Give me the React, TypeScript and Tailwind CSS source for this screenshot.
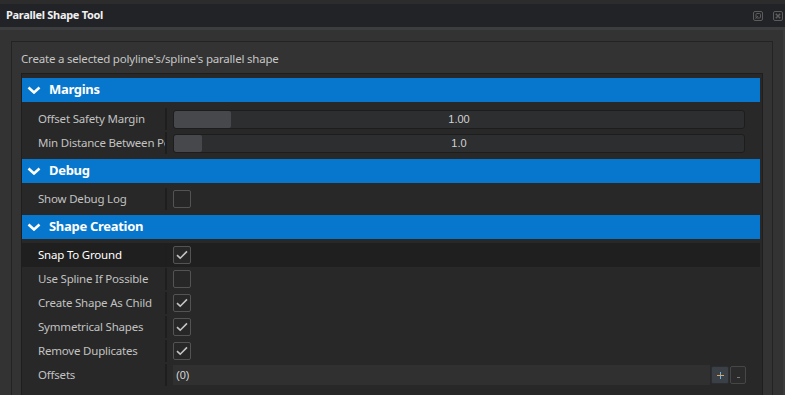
type Row =
  | { kind: "slider"; label: string; value: string; fill: number }
  | { kind: "check"; label: string; checked: boolean; active?: boolean }
  | { kind: "list"; label: string; value: string };

const sections: { title: string; rowsTop: string; rows: Row[] }[] = [
  {
    title: "Margins",
    rowsTop: "pt-[5px]",
    rows: [
      { kind: "slider", label: "Offset Safety Margin", value: "1.00", fill: 57 },
      { kind: "slider", label: "Min Distance Between Points", value: "1.0", fill: 28 },
    ],
  },
  {
    title: "Debug",
    rowsTop: "pt-[4px]",
    rows: [{ kind: "check", label: "Show Debug Log", checked: false }],
  },
  {
    title: "Shape Creation",
    rowsTop: "pt-[4px]",
    rows: [
      { kind: "check", label: "Snap To Ground", checked: true, active: true },
      { kind: "check", label: "Use Spline If Possible", checked: false },
      { kind: "check", label: "Create Shape As Child", checked: true },
      { kind: "check", label: "Symmetrical Shapes", checked: true },
      { kind: "check", label: "Remove Duplicates", checked: true },
      { kind: "list", label: "Offsets", value: "(0)" },
    ],
  },
];

function Checkbox({ checked }: { checked: boolean }) {
  return (
    <div className="w-[18px] h-[18px] rounded-[2px] border border-[#535353] bg-[#272727] flex items-center justify-center">
      {checked && (
        <svg width="12" height="10" viewBox="0 0 12 10" fill="none">
          <path d="M1 5.2 L4.2 8.2 L11 1.4" stroke="#c4c4c4" strokeWidth="1.6" />
        </svg>
      )}
    </div>
  );
}

function Slider({ value, fill }: { value: string; fill: number }) {
  return (
    <div className="relative w-[572px] h-[19px] rounded-[3px] border border-[#1d1d1d] bg-[#2d2e30] overflow-hidden flex items-center justify-center">
      <div
        className="absolute left-0 top-0 bottom-0 bg-[#46484b] rounded-[2px]"
        style={{ width: fill }}
      />
      <span className="relative text-[11px] text-[#d2d2d2] font-['Liberation_Sans',sans-serif]">
        {value}
      </span>
    </div>
  );
}

function ListField({ value }: { value: string }) {
  return (
    <div className="flex items-center h-[20px] gap-[1px]">
      <div className="w-[537px] h-[20px] bg-[#303030] flex items-center px-[3px] text-[11px] text-[#d8d8d8] font-['Liberation_Sans',sans-serif]">
        {value}
      </div>
      <div className="w-[18px] h-[18px] rounded-[2px] bg-[#3b4047] border border-[#2a2d31] flex items-center justify-center">
        <svg width="7" height="7" viewBox="0 0 7 7">
          <rect x="3" y="0" width="1" height="7" fill="#6fb0e8" />
          <rect x="0" y="3" width="7" height="1" fill="#d8a85a" />
        </svg>
      </div>
      <div className="w-[16px] h-[18px] rounded-[2px] border border-[#464646] bg-[#2b2b2b] flex items-center justify-center">
        <div className="w-[3px] h-[1px] bg-[#7a7a7a] mt-[4px]" />
      </div>
    </div>
  );
}

function PropertyRow({ row }: { row: Row }) {
  const active = row.kind === "check" && row.active;
  return (
    <div className={`h-[24px] flex items-stretch ${active ? "bg-[#1f1f20]" : ""}`}>
      <div
        className={`w-[143px] pl-[16px] flex items-center overflow-hidden whitespace-nowrap text-[11.5px] tracking-[-0.2px] ${
          active ? "text-white" : "text-[#c2c2c2]"
        }`}
      >
        {row.label}
      </div>
      <div className="w-[2px] my-[1px] bg-[#1e1e1e]" />
      <div className="flex-1 pl-[6px] flex items-center">
        {row.kind === "slider" && <Slider value={row.value} fill={row.fill} />}
        {row.kind === "check" && <Checkbox checked={row.checked} />}
        {row.kind === "list" && <ListField value={row.value} />}
      </div>
    </div>
  );
}

export default function App() {
  return (
    <div className="w-[785px] h-[395px] overflow-hidden bg-[#333333] flex flex-col font-['Noto_Sans',sans-serif]">
      <div className="h-[4px] bg-[#2c2c2c]" />
      <div className="h-[23px] bg-[#222326] flex items-center justify-between pl-[6px] pr-[2px]">
        <span className="text-[11px] font-bold text-[#f0f0f0] tracking-[-0.3px]">
          Parallel Shape Tool
        </span>
        <div className="flex items-center gap-[10px]">
          <svg width="10" height="10" viewBox="0 0 10 10" fill="none">
            <rect x="0.5" y="0.5" width="9" height="9" rx="1.5" stroke="#5c5c5c" />
            <rect x="3" y="2.5" width="4.5" height="4.5" rx="1" stroke="#5c5c5c" />
            <path d="M2.5 7.5 L5 5" stroke="#5c5c5c" />
          </svg>
          <svg width="10" height="10" viewBox="0 0 10 10" fill="none">
            <rect x="0.5" y="0.5" width="9" height="9" rx="1.5" stroke="#5c5c5c" />
            <path d="M2.8 2.8 L7.2 7.2 M7.2 2.8 L2.8 7.2" stroke="#5c5c5c" strokeWidth="1.6" />
          </svg>
        </div>
      </div>
      <div className="h-[3px] bg-[#3c3d3f]" />
      <div className="flex-1 min-h-0 flex">
        <div className="flex-1 min-h-0 flex pl-[11px] pr-[10px] pt-[11px]">
          <div className="flex-1 min-h-0 flex flex-col border border-b-0 border-[#232323] px-[9px]">
            <p className="h-[31px] pt-[10px] leading-[14px] text-[11.5px] tracking-[-0.2px] text-[#c6c6c6]">
              Create a selected polyline's/spline's parallel shape
            </p>
            <div className="flex-1 min-h-0 border border-b-0 border-[#1e1e1e] bg-[#282828] pt-[4px] pr-[2px] flex flex-col">
              {sections.map((section) => (
                <div key={section.title} className="flex flex-col pb-[4px]">
                  <div className="h-[24px] bg-[#0677cd] flex items-center pl-[5px] gap-[8px]">
                    <svg width="14" height="8" viewBox="0 0 14 8" fill="none">
                      <path d="M1.5 1.5 L7 6.5 L12.5 1.5" stroke="white" strokeWidth="2.6" />
                    </svg>
                    <span className="text-[13px] font-bold text-white tracking-[-0.3px]">
                      {section.title}
                    </span>
                  </div>
                  <div className={`${section.rowsTop} flex flex-col`}>
                    {section.rows.map((row) => (
                      <PropertyRow key={row.label} row={row} />
                    ))}
                  </div>
                </div>
              ))}
            </div>
          </div>
        </div>
        <div className="w-[2px] bg-[#3b3b3b]" />
      </div>
    </div>
  );
}
